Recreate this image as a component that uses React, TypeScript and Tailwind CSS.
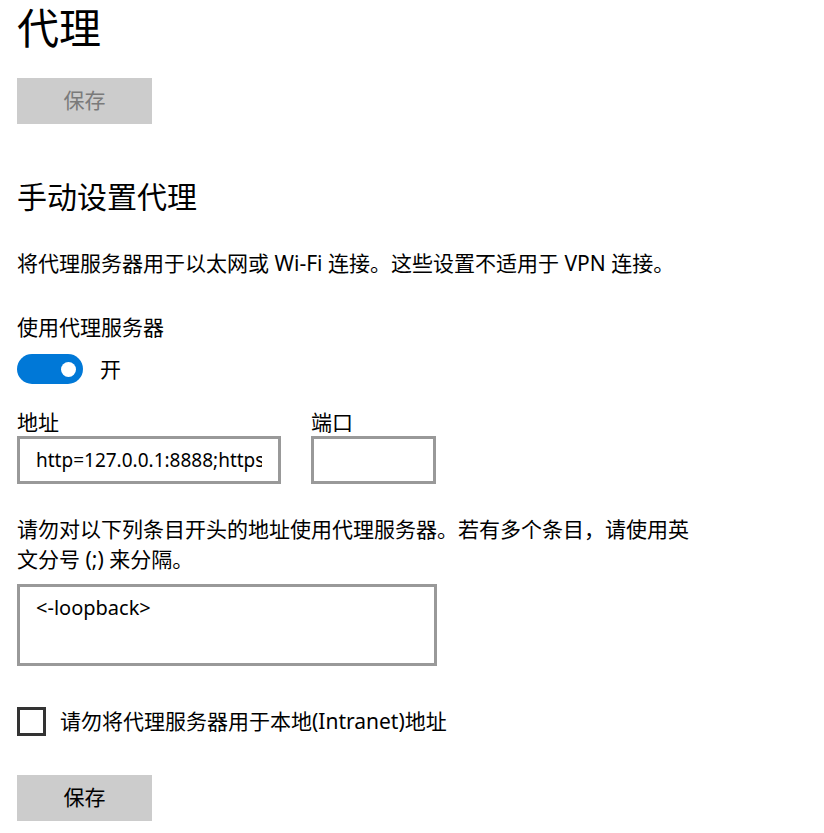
import React, { useState } from "react";

const font = "font-['Noto_Sans','Noto_Sans_CJK_SC',sans-serif]";

const App: React.FC = () => {
  const [proxyOn, setProxyOn] = useState(true);
  const [address, setAddress] = useState("http=127.0.0.1:8888;https=127.0.0.1:8888");
  const [port, setPort] = useState("");
  const [bypass, setBypass] = useState("<-loopback>");
  const [local, setLocal] = useState(false);

  return (
    <div className={`${font} min-h-[833px] w-[824px] bg-white pl-[17px] text-black`}>
      {/* Page title */}
      <h1 className="h-[55px] text-[42px] leading-[55px]">代理</h1>

      {/* Disabled save at top */}
      <button
        disabled
        className="mt-[23px] flex h-[46px] w-[135px] items-center justify-center bg-[#cccccc] text-[21px] text-[#7a7a7a]"
      >
        保存
      </button>

      {/* Manual proxy section */}
      <h2 className="mt-[53px] h-[40px] text-[30px] leading-[40px]">手动设置代理</h2>
      <p className="mt-[31px] h-[30px] text-[21px] leading-[30px]">
        将代理服务器用于以太网或 Wi-Fi 连接。这些设置不适用于 VPN 连接。
      </p>

      <p className="mt-[34px] h-[30px] text-[21px] leading-[30px]">使用代理服务器</p>
      <div className="mt-[12px] flex h-[30px] items-center">
        <button
          onClick={() => setProxyOn(!proxyOn)}
          className="flex h-[30px] w-[66px] items-center justify-end rounded-full bg-[#0078d7] pr-[7px]"
        >
          <span className="block h-[15px] w-[15px] rounded-full bg-white" />
        </button>
        <span className="ml-[17px] text-[21px] leading-[30px]">{proxyOn ? "开" : "关"}</span>
      </div>

      {/* Address + port */}
      <div className="mt-[24px] flex gap-[30px]">
        <div className="flex flex-col">
          <label className="h-[28px] text-[21px] leading-[28px]">地址</label>
          <input
            value={address}
            onChange={(e) => setAddress(e.target.value)}
            className="h-[48px] w-[264px] border-[3px] border-[#999999] px-[16px] text-[19px] outline-none"
          />
        </div>
        <div className="flex flex-col">
          <label className="h-[28px] text-[21px] leading-[28px]">端口</label>
          <input
            value={port}
            onChange={(e) => setPort(e.target.value)}
            className="h-[48px] w-[125px] border-[3px] border-[#999999] px-[16px] text-[19px] outline-none"
          />
        </div>
      </div>

      <p className="mt-[30px] text-[21px] leading-[30px]">
        请勿对以下列条目开头的地址使用代理服务器。若有多个条目，请使用英
        <br />
        文分号 (;) 来分隔。
      </p>
      <textarea
        value={bypass}
        onChange={(e) => setBypass(e.target.value)}
        className="mt-[10px] block h-[82px] w-[420px] resize-none border-[3px] border-[#999999] px-[16px] py-[6px] text-[20px] leading-[30px] outline-none"
      />

      <label className="mt-[41px] flex h-[29px] cursor-pointer items-center">
        <span
          onClick={() => setLocal(!local)}
          className="block h-[29px] w-[29px] border-[3px] border-[#333333]"
        />
        <span className="ml-[14px] text-[21px] leading-[29px]">
          请勿将代理服务器用于本地(Intranet)地址
        </span>
      </label>

      <button className="mt-[39px] flex h-[46px] w-[135px] items-center justify-center bg-[#cccccc] text-[21px] text-black">
        保存
      </button>
    </div>
  );
};

export default App;
